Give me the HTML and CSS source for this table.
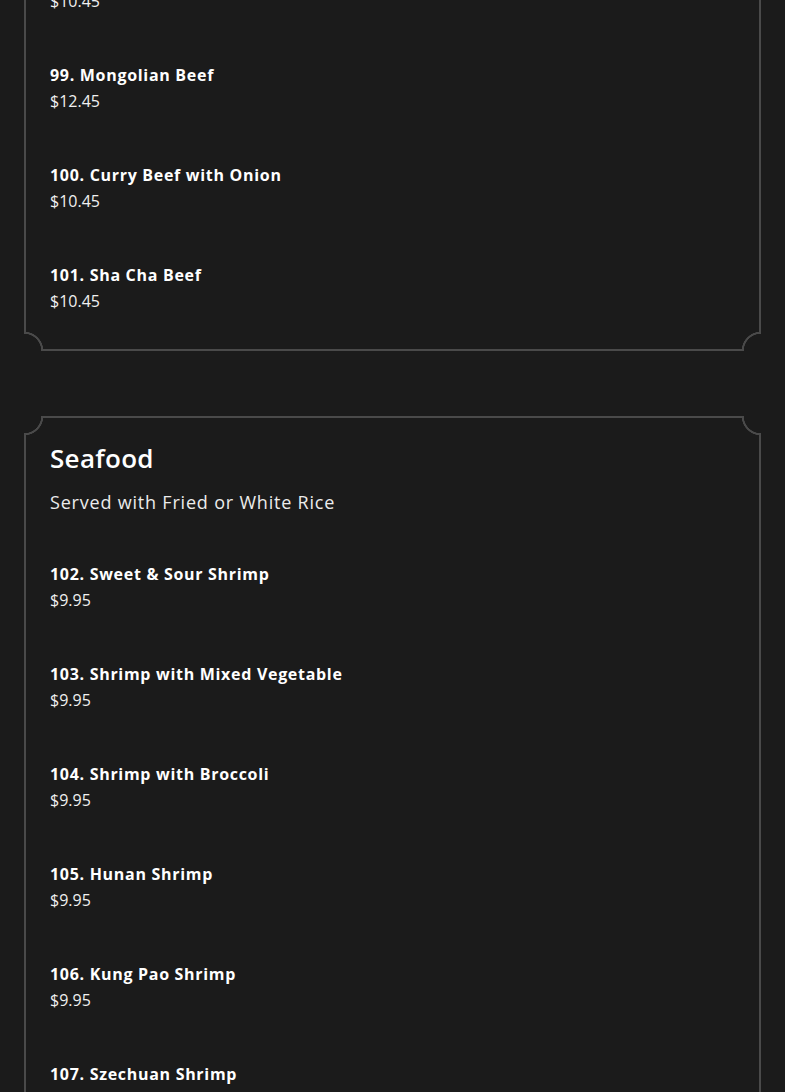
FILE: index.html
```html
<!DOCTYPE html>
<html lang="en">
<head>
<meta charset="utf-8">
<title>Menu</title>
<link rel="stylesheet" href="styles.css">
</head>
<body>
<main class="menu">
  <section class="card card-scrolled">
    <span class="corner tl"></span><span class="corner tr"></span><span class="corner bl"></span><span class="corner br"></span>
    <ul class="items">
      <li class="item"><div class="name">98. Beef with Snow Peas</div><div class="price">$10.45</div></li>
      <li class="item"><div class="name">99. Mongolian Beef</div><div class="price">$12.45</div></li>
      <li class="item"><div class="name">100. Curry Beef with Onion</div><div class="price">$10.45</div></li>
      <li class="item"><div class="name">101. Sha Cha Beef</div><div class="price">$10.45</div></li>
    </ul>
  </section>
  <section class="card">
    <span class="corner tl"></span><span class="corner tr"></span><span class="corner bl"></span><span class="corner br"></span>
    <h2 class="title">Seafood</h2>
    <p class="subtitle">Served with Fried or White Rice</p>
    <ul class="items">
      <li class="item"><div class="name">102. Sweet &amp; Sour Shrimp</div><div class="price">$9.95</div></li>
      <li class="item"><div class="name">103. Shrimp with Mixed Vegetable</div><div class="price">$9.95</div></li>
      <li class="item"><div class="name">104. Shrimp with Broccoli</div><div class="price">$9.95</div></li>
      <li class="item"><div class="name">105. Hunan Shrimp</div><div class="price">$9.95</div></li>
      <li class="item"><div class="name">106. Kung Pao Shrimp</div><div class="price">$9.95</div></li>
      <li class="item"><div class="name">107. Szechuan Shrimp</div><div class="price">$9.95</div></li>
    </ul>
  </section>
</main>
</body>
</html>
```
FILE: styles.css
```css
* { box-sizing: border-box; }
html, body { margin: 0; padding: 0; }
body {
  background: #1b1b1b;
  color: #ffffff;
  font-family: "Open Sans", "Liberation Sans", sans-serif;
  overflow: hidden;
}
.menu {
  display: flex;
  flex-direction: column;
  gap: 65px;
  padding: 0 24px;
}
.card {
  position: relative;
  border: 2px solid #4a4a4a;
  background: #1b1b1b;
  padding: 24px 24px 35px;
}
.card-scrolled { margin-top: -64px; }
.corner {
  position: absolute;
  width: 22px;
  height: 22px;
}
.corner.tl { top: -2px; left: -2px; background: radial-gradient(circle at 0 0, #1b1b1b 17px, #4a4a4a 17.5px, #4a4a4a 19px, rgba(27,27,27,0) 19.6px); }
.corner.tr { top: -2px; right: -2px; background: radial-gradient(circle at 100% 0, #1b1b1b 17px, #4a4a4a 17.5px, #4a4a4a 19px, rgba(27,27,27,0) 19.6px); }
.corner.bl { bottom: -2px; left: -2px; background: radial-gradient(circle at 0 100%, #1b1b1b 17px, #4a4a4a 17.5px, #4a4a4a 19px, rgba(27,27,27,0) 19.6px); }
.corner.br { bottom: -2px; right: -2px; background: radial-gradient(circle at 100% 100%, #1b1b1b 17px, #4a4a4a 17.5px, #4a4a4a 19px, rgba(27,27,27,0) 19.6px); }
.title {
  margin: 0 0 15px;
  font-size: 26px;
  line-height: 32px;
  font-weight: 600;
  letter-spacing: 0.3px;
}
.subtitle {
  margin: 0 0 46px;
  font-size: 18px;
  line-height: 26px;
  color: #ececec;
  letter-spacing: 0.8px;
}
.items {
  list-style: none;
  margin: 0;
  padding: 0;
  display: flex;
  flex-direction: column;
  gap: 48px;
}
.name {
  font-size: 16px;
  line-height: 26px;
  font-weight: 700;
  letter-spacing: 0.7px;
}
.price {
  font-size: 16px;
  line-height: 26px;
  color: #f0f0f0;
}
```
